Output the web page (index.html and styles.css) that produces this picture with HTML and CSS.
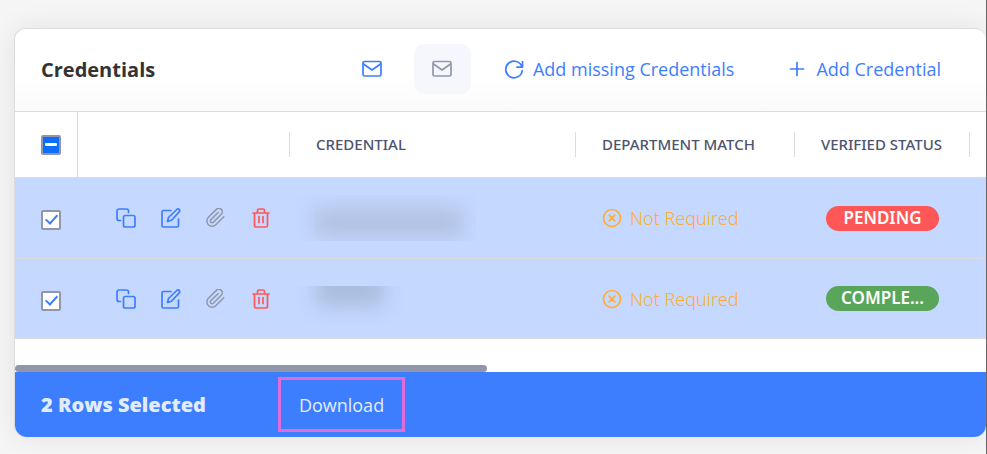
FILE: index.html
```html
<!DOCTYPE html>
<html lang="en">
<head>
    <meta charset="UTF-8">
    <meta name="viewport" content="width=device-width, initial-scale=1.0">
    <title>Credentials</title>
    <link rel="stylesheet" href="styles.css">
</head>
<body>
    <!-- shared icons -->
    <svg class="sprite" aria-hidden="true">
        <symbol id="mail" viewBox="0 0 20 20">
            <rect x="1" y="2.5" width="18" height="14.5" rx="1.5"/>
            <path d="M1.5 5l8.5 6 8.5-6"/>
        </symbol>
        <symbol id="refresh" viewBox="0 0 20 20">
            <path d="M18.5 2.5v5.6h-5.6M18 8A8.3 8.3 0 1 0 18.3 11.5"/>
        </symbol>
        <symbol id="plus" viewBox="0 0 20 20">
            <path d="M10 3.500v13M3.500 10h13"/>
        </symbol>
        <symbol id="copy" viewBox="0 0 20 20">
            <rect x="7.5" y="7.5" width="11.5" height="11.5" rx="1.8"/>
            <path d="M4.5 12.5H3A2 2 0 0 1 1 10.500V3a2 2 0 0 1 2-2h7.500a2 2 0 0 1 2 2v1.500"/>
        </symbol>
        <symbol id="edit" viewBox="0 0 20 20">
            <path d="M10 2.500H2.500A1.500 1.500 0 0 0 1 4v13.500A1.500 1.500 0 0 0 2.500 19H16a1.500 1.500 0 0 0 1.500-1.500V11"/>
            <path d="M6.500 13.500l1-4L15.800 1.500a1.600 1.600 0 0 1 2.400 0a1.600 1.600 0 0 1 0 2.400L10.500 12.300z"/>
        </symbol>
        <symbol id="clip" viewBox="1 1 23 23">
            <path d="M21.440 11.050l-9.190 9.190a6 6 0 0 1-8.490-8.490l9.190-9.190a4 4 0 0 1 5.660 5.660l-9.200 9.190a2 2 0 0 1-2.830-2.830l8.490-8.480"/>
        </symbol>
        <symbol id="trash" viewBox="0 0 20 20">
            <path d="M2 5h16M6.500 5V2.500A1.500 1.500 0 0 1 8 1h4a1.500 1.500 0 0 1 1.500 1.500V5M3.500 5v12.500A1.500 1.500 0 0 0 5 19h10a1.500 1.500 0 0 0 1.500-1.500V5M8 8.500v6M12 8.500v6"/>
        </symbol>
        <symbol id="cross" viewBox="0 0 20 20">
            <circle cx="10" cy="10" r="8.500"/>
            <path d="M7.200 7.200l5.600 5.600M12.800 7.200l-5.600 5.600"/>
        </symbol>
    </svg>

    <div class="card">
        <div class="card-header">
            <h1>Credentials</h1>
            <div class="toolbar">
                <button type="button" class="btn btn-icon" aria-label="Send email"><svg class="icon"><use href="#mail"/></svg></button>
                <button type="button" class="btn btn-icon btn-disabled" aria-label="Send email to selected" disabled><svg class="icon"><use href="#mail"/></svg></button>
                <button type="button" class="btn"><svg class="icon"><use href="#refresh"/></svg>Add missing Credentials</button>
                <button type="button" class="btn"><svg class="icon"><use href="#plus"/></svg>Add Credential</button>
            </div>
        </div>

        <table class="grid">
            <colgroup>
                <col class="col-check">
                <col class="col-actions">
                <col>
                <col class="col-match">
                <col class="col-status">
                <col class="col-rest">
            </colgroup>
            <thead>
                <tr>
                    <th class="check-cell"><input type="checkbox" class="checkbox partial" aria-label="Select all rows"></th>
                    <th><div class="label"></div></th>
                    <th><div class="label">CREDENTIAL</div></th>
                    <th><div class="label">DEPARTMENT MATCH</div></th>
                    <th><div class="label">VERIFIED STATUS</div></th>
                    <th></th>
                </tr>
            </thead>
            <tbody>
                <tr>
                    <td class="check-cell"><input type="checkbox" class="checkbox" aria-label="Select row 1" checked></td>
                    <td>
                        <div class="actions">
                            <button type="button" aria-label="Copy"><svg class="icon"><use href="#copy"/></svg></button>
                            <button type="button" aria-label="Edit"><svg class="icon"><use href="#edit"/></svg></button>
                            <button type="button" class="muted" aria-label="Attachments"><svg class="icon"><use href="#clip"/></svg></button>
                            <button type="button" class="danger" aria-label="Delete"><svg class="icon"><use href="#trash"/></svg></button>
                        </div>
                    </td>
                    <td><div class="hidden-name long"></div></td>
                    <td><div class="match"><svg class="icon"><use href="#cross"/></svg>Not Required</div></td>
                    <td><div class="pill pending">PENDING</div></td>
                    <td></td>
                </tr>
                <tr>
                    <td class="check-cell"><input type="checkbox" class="checkbox" aria-label="Select row 2" checked></td>
                    <td>
                        <div class="actions">
                            <button type="button" aria-label="Copy"><svg class="icon"><use href="#copy"/></svg></button>
                            <button type="button" aria-label="Edit"><svg class="icon"><use href="#edit"/></svg></button>
                            <button type="button" class="muted" aria-label="Attachments"><svg class="icon"><use href="#clip"/></svg></button>
                            <button type="button" class="danger" aria-label="Delete"><svg class="icon"><use href="#trash"/></svg></button>
                        </div>
                    </td>
                    <td><div class="hidden-name short"></div></td>
                    <td><div class="match"><svg class="icon"><use href="#cross"/></svg>Not Required</div></td>
                    <td><div class="pill complete">COMPLE...</div></td>
                    <td></td>
                </tr>
            </tbody>
        </table>

        <div class="scroll"><div class="thumb"></div></div>

        <div class="selection-bar">
            <strong>2 Rows Selected</strong>
            <button type="button" class="download">Download</button>
        </div>
    </div>
</body>
</html>
```
FILE: styles.css
```css
*, *::before {
    box-sizing: border-box;
}

html {
    height: 100%;
    background-color: #f5f5f5;
}

body {
    min-height: 100%;
    margin: 0;
    padding: 28px 0 17px 14px;
    border-right: 1px solid #666;
    font-family: "Open Sans", "Noto Sans", sans-serif;
    font-size: 18px;
    overflow: hidden;
}

button {
    border: none;
    background: none;
    font-family: inherit;
    cursor: pointer;
}

.sprite {
    display: none;
}

.icon {
    display: block;
    width: 20px;
    height: 20px;
    fill: none;
    stroke: currentColor;
    stroke-width: 1.7;
    stroke-linecap: round;
    stroke-linejoin: round;
}

.card {
    border: 1px solid #dcdcdc;
    border-right: none;
    border-bottom: none;
    border-radius: 12px;
    background-color: #fff;
    box-shadow: 0 0 28px rgba(0, 0, 0, 0.08);
}

.card-header {
    display: flex;
    align-items: center;
    justify-content: space-between;
    height: 83px;
    padding: 0 25px 2px 26px;
    border-bottom: 1px solid #dcdcdc;
    border-radius: 12px 12px 0 0;
    background: linear-gradient(#fff 60%, #fafafa);
}

h1 {
    margin: 0;
    font-size: 20px;
    font-weight: 700;
    color: #333;
}

.toolbar {
    display: flex;
    gap: 13px;
}

.btn {
    display: flex;
    align-items: center;
    gap: 9px;
    height: 50px;
    padding: 0 20px;
    border-radius: 10px;
    font-size: 18px;
    color: #3d7eff;
}

.btn-icon {
    justify-content: center;
    width: 57px;
    padding: 0;
}

.btn-disabled {
    background-color: #f6f7fc;
    color: #9196ab;
}

/* table */

.grid {
    width: 100%;
    table-layout: fixed;
    border-collapse: separate;
    border-spacing: 0;
    font-family: "Noto Sans", "Open Sans", sans-serif;
}

.col-check {
    width: 63px;
}

.col-actions {
    width: 212px;
}

.col-match {
    width: 219px;
}

.col-status {
    width: 175px;
}

.col-rest {
    width: 16px;
}

th, td {
    padding: 0;
    border-bottom: 1px solid #dcdcdc;
    text-align: left;
}

th {
    height: 66px;
}

td {
    height: 80px;
    background-color: #c5d8ff;
}

tbody tr:first-child td {
    height: 81px;
}

.check-cell {
    padding-left: 26px;
}

td.check-cell {
    padding-top: 4px;
}

th.check-cell {
    border-right: 1px solid #dcdcdc;
}

.label {
    height: 25px;
    padding-left: 26px;
    border-right: 1px solid #dcdcdc;
    font-size: 15px;
    font-weight: 500;
    line-height: 25px;
    color: #4d5470;
    white-space: nowrap;
}

.checkbox {
    appearance: none;
    display: block;
    width: 20px;
    height: 20px;
    margin: 0;
    padding: 0 0 0 5px;
    border: 2px solid #9196ab;
    border-radius: 2px;
    background-color: #fff;
}

.checkbox:checked::before {
    content: "";
    display: block;
    width: 7px;
    height: 12px;
    border: solid #3d7eff;
    border-width: 0 2px 2px 0;
    transform: rotate(42deg);
}

.checkbox.partial {
    padding: 6px 2px;
    background-color: #0d6efd;
}

.checkbox.partial::before {
    content: "";
    display: block;
    height: 3px;
    border-radius: 1px;
    background-color: #fff;
}

.actions {
    display: flex;
    gap: 25px;
    padding-left: 38px;
}

.actions button {
    padding: 0;
    color: #3d7eff;
}

.actions .muted {
    color: #9196ab;
}

.actions .danger {
    color: #ff5757;
}

/* obscured names */

.hidden-name {
    margin-left: 6px;
    overflow: hidden;
}

.hidden-name::before {
    content: "";
    display: block;
    background-color: #b1c2e3;
    filter: blur(10px);
}

.hidden-name.long {
    width: 180px;
    height: 46px;
    padding: 12px 12px 0 18px;
}

.hidden-name.long::before {
    height: 30px;
}

.hidden-name.short {
    width: 108px;
    height: 38px;
    margin-top: 13px;
    padding: 0 20px;
}

/* starts above the clipped edge, so the top stays dark */
.hidden-name.short::before {
    height: 34px;
    margin-top: -14px;
    background-color: #a9bcdd;
}

.match {
    display: flex;
    align-items: center;
    gap: 8px;
    padding-left: 26px;
    font-weight: 300;
    color: #ffad33;
}

.pill {
    width: 113px;
    height: 25px;
    margin-left: 31px;
    border-radius: 13px;
    font-size: 17px;
    font-weight: 600;
    line-height: 24px;
    text-align: center;
    color: #fff;
}

.pending {
    background-color: #ff5757;
}

.complete {
    background-color: #59a559;
}

.scroll {
    padding-top: 26px;
}

.thumb {
    width: 48.6%;
    height: 7px;
    border-radius: 4px;
    background-color: #9196ab;
}

.selection-bar {
    display: flex;
    align-items: center;
    gap: 72px;
    height: 65px;
    padding-left: 26px;
    border-radius: 0 0 12px 12px;
    background-color: #3d7eff;
    color: #e3ecff;
}

.selection-bar strong {
    font-size: 20px;
    font-weight: 800;
}

.download {
    height: 55px;
    padding: 0 18px;
    border: 3px solid #e06bdc;
    font-size: 18px;
    color: #e3ecff;
}
```
